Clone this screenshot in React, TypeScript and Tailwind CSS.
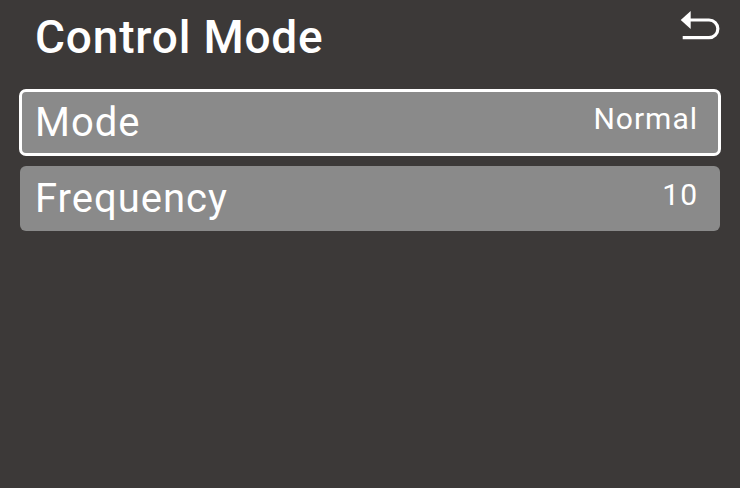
import React from 'react';

interface Row {
  label: string;
  value: string;
  selected?: boolean;
}

const rows: Row[] = [
  { label: 'Mode', value: 'Normal', selected: true },
  { label: 'Frequency', value: '10' },
];

function BackIcon() {
  return (
    <svg width="40" height="32" viewBox="0 0 40 32" fill="none">
      <path d="M0.7 10 L10.7 1 L10.7 19 Z" fill="white" />
      <path
        d="M10 10 H29 A8.85 8.85 0 0 1 29 27.7 H2.7"
        stroke="white"
        strokeWidth="3.2"
        fill="none"
      />
    </svg>
  );
}

export default function App() {
  return (
    <div className="w-[740px] h-[488px] bg-[#3c3938] text-white font-['Roboto',sans-serif] overflow-hidden">
      {/* HEADER */}
      <div className="flex items-start justify-between pt-[10px] pl-[35px] pr-[20px]">
        <h1 className="mt-[4px] text-[46px] leading-[46px] font-medium tracking-[0.8px]">Control Mode</h1>
        <BackIcon />
      </div>

      {/* LIST */}
      <div className="mt-[29px]">
        {rows.map((row) =>
          row.selected ? (
            <div
              key={row.label}
              className="mx-[19px] h-[67px] border-[3px] border-white rounded-[7px] bg-[#8a8a8a] flex items-center justify-between pl-[13px] pr-[20px]"
            >
              <span className="text-[40px] leading-none tracking-[1px]">{row.label}</span>
              <span className="text-[30px] leading-none tracking-[1px] -mt-[8px]">{row.value}</span>
            </div>
          ) : (
            <div
              key={row.label}
              className="mt-[10px] mx-[20px] h-[65px] rounded-[6px] bg-[#8a8a8a] flex items-center justify-between pl-[15px] pr-[22px]"
            >
              <span className="text-[40px] leading-none tracking-[1px]">{row.label}</span>
              <span className="text-[30px] leading-none tracking-[1px] -mt-[8px]">{row.value}</span>
            </div>
          )
        )}
      </div>
    </div>
  );
}
